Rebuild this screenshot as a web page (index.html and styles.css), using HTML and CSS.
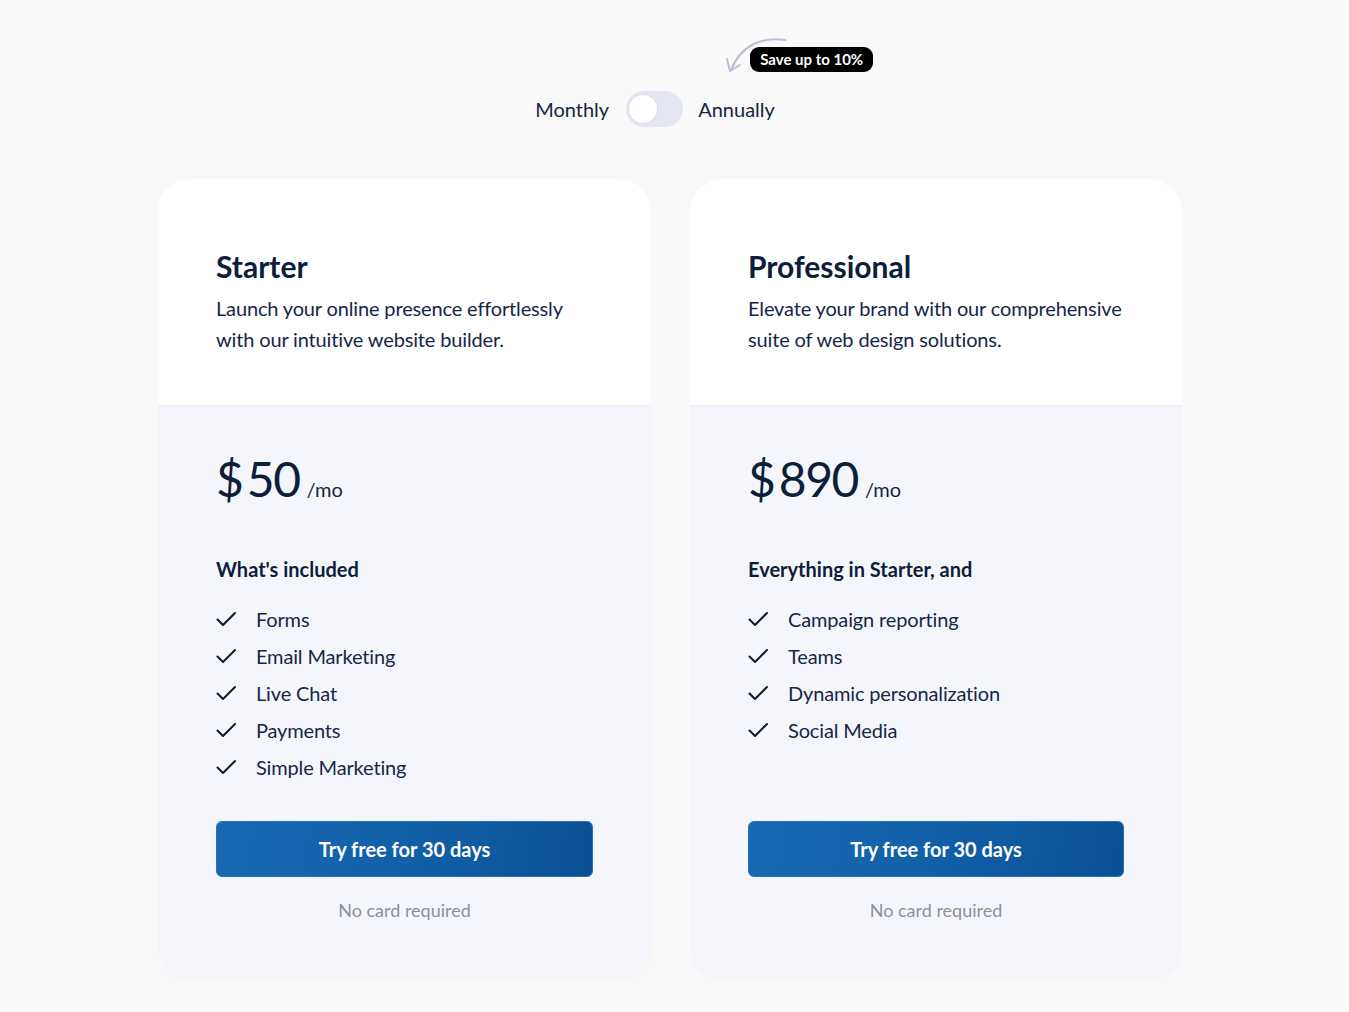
FILE: index.html
```html
<!DOCTYPE html>
<html lang="en">
<head>
<meta charset="utf-8">
<title>Pricing</title>
<link rel="stylesheet" href="styles.css">
</head>
<body>
<main class="page">
  <div class="toggle-row">
    <span class="toggle-label">Monthly</span>
    <span class="switch"><span class="knob"></span></span>
    <span class="toggle-label annual">Annually
      <span class="promo">
        <svg class="promo-arrow" width="64" height="40" viewBox="0 0 64 40" fill="none" stroke="#b7c1cf" stroke-width="2" stroke-linecap="round" stroke-linejoin="round">
          <path d="M61 3 C40 0 18 6 7 33"/>
          <path d="M3 22 L6 34 L16 28"/>
        </svg>
        <span class="badge">Save up to 10%</span>
      </span>
    </span>
  </div>

  <section class="plans">
    <article class="card">
      <header class="card-top">
        <h2 class="plan-name">Starter</h2>
        <p class="plan-desc">Launch your online presence effortlessly with our intuitive website builder.</p>
      </header>
      <div class="card-body">
        <div class="price"><span class="amount">$<span class="num">50</span></span><span class="per">/mo</span></div>
        <h3 class="incl">What's included</h3>
        <ul class="features">
          <li><svg class="check" viewBox="0 0 20 20"><path d="M1.5 10.5 L7 16 L19 4"/></svg>Forms</li>
          <li><svg class="check" viewBox="0 0 20 20"><path d="M1.5 10.5 L7 16 L19 4"/></svg>Email Marketing</li>
          <li><svg class="check" viewBox="0 0 20 20"><path d="M1.5 10.5 L7 16 L19 4"/></svg>Live Chat</li>
          <li><svg class="check" viewBox="0 0 20 20"><path d="M1.5 10.5 L7 16 L19 4"/></svg>Payments</li>
          <li><svg class="check" viewBox="0 0 20 20"><path d="M1.5 10.5 L7 16 L19 4"/></svg>Simple Marketing</li>
        </ul>
        <div class="cta">
          <button class="btn">Try free for 30 days</button>
          <p class="note">No card required</p>
        </div>
      </div>
    </article>

    <article class="card">
      <header class="card-top">
        <h2 class="plan-name">Professional</h2>
        <p class="plan-desc">Elevate your brand with our comprehensive suite of web design solutions.</p>
      </header>
      <div class="card-body">
        <div class="price"><span class="amount">$<span class="num">890</span></span><span class="per">/mo</span></div>
        <h3 class="incl">Everything in Starter, and</h3>
        <ul class="features">
          <li><svg class="check" viewBox="0 0 20 20"><path d="M1.5 10.5 L7 16 L19 4"/></svg>Campaign reporting</li>
          <li><svg class="check" viewBox="0 0 20 20"><path d="M1.5 10.5 L7 16 L19 4"/></svg>Teams</li>
          <li><svg class="check" viewBox="0 0 20 20"><path d="M1.5 10.5 L7 16 L19 4"/></svg>Dynamic personalization</li>
          <li><svg class="check" viewBox="0 0 20 20"><path d="M1.5 10.5 L7 16 L19 4"/></svg>Social Media</li>
        </ul>
        <div class="cta">
          <button class="btn">Try free for 30 days</button>
          <p class="note">No card required</p>
        </div>
      </div>
    </article>
  </section>
</main>
</body>
</html>
```

FILE: styles.css
```css
* { box-sizing: border-box; }

html, body {
  margin: 0;
  padding: 0;
}

body {
  background: #f9f9fa;
  font-family: Lato, "Noto Sans", "Liberation Sans", sans-serif;
  color: #0f1f3c;
  min-height: 1012px;
}

.page {
  width: 1024px;
  margin-left: 158px;
  padding-top: 91px;
}

.toggle-row {
  display: flex;
  align-items: center;
  justify-content: center;
  padding-right: 30px;
  height: 36px;
}

.toggle-label {
  font-size: 20px;
  line-height: 24px;
  color: #15253f;
}

.annual {
  position: relative;
}

.switch {
  width: 57px;
  height: 36px;
  border-radius: 18px;
  background: #e4e7f2;
  margin: 0 15px 0 17px;
  padding: 4px 3px;
  display: flex;
  align-items: center;
}

.knob {
  width: 28px;
  height: 28px;
  border-radius: 50%;
  background: #ffffff;
  box-shadow: 0 0 2px rgba(0, 0, 0, 0.12);
}

.promo {
  position: absolute;
  left: 26px;
  top: -70px;
}

.promo-arrow {
  position: absolute;
  left: 0;
  top: 10px;
}

.badge {
  position: absolute;
  left: 26px;
  top: 20px;
  white-space: nowrap;
  background: #000000;
  color: #ffffff;
  font-size: 15px;
  font-weight: 700;
  line-height: 17px;
  padding: 4px 10px;
  border-radius: 9px;
}

.plans {
  margin-top: 52px;
  display: grid;
  grid-template-columns: 493px 492px;
  column-gap: 39px;
  align-items: stretch;
}

.card {
  border-radius: 32px;
  overflow: hidden;
  display: flex;
  flex-direction: column;
  background: #f5f6fc;
}

.card-top {
  background: #ffffff;
  padding: 69px 56px 50px 58px;
  border-bottom: 2px solid #eff0f4;
}

.plan-name {
  margin: 0;
  font-size: 30px;
  line-height: 36px;
  font-weight: 700;
  color: #0d1e3b;
}

.plan-desc {
  margin: 9px 0 0;
  font-size: 20px;
  line-height: 31px;
  letter-spacing: -0.15px;
  color: #16264a;
}

.card-body {
  flex: 1;
  padding: 44px 58px 59px;
  display: flex;
  flex-direction: column;
}

.price {
  display: flex;
  align-items: baseline;
  height: 56px;
  line-height: 56px;
}

.amount {
  font-size: 48px;
  color: #0d1e3b;
}

.num {
  margin-left: 3px;
  letter-spacing: -1.5px;
}

.per {
  font-size: 20px;
  margin-left: 7px;
  color: #15253f;
}

.incl {
  margin: 48px 0 0;
  font-size: 20px;
  line-height: 28px;
  font-weight: 700;
  color: #0d1e3b;
}

.features {
  list-style: none;
  margin: 17px 0 0;
  padding: 0;
}

.features li {
  display: flex;
  align-items: center;
  height: 37px;
  font-size: 20px;
  letter-spacing: -0.15px;
  color: #16264a;
}

.check {
  width: 20px;
  height: 20px;
  margin-right: 20px;
  fill: none;
  stroke: #111827;
  stroke-width: 2;
  stroke-linecap: round;
  stroke-linejoin: round;
  flex: none;
}

.cta {
  margin-top: auto;
  padding-top: 36px;
  display: flex;
  flex-direction: column;
  align-items: center;
}

.btn {
  width: 100%;
  height: 56px;
  border: 1px solid #2a70b6;
  border-radius: 6px;
  background: linear-gradient(100deg, #1868b2 0%, #1260a8 50%, #0a4f93 100%);
  color: #ffffff;
  font-family: inherit;
  font-size: 20px;
  font-weight: 700;
  cursor: pointer;
}

.note {
  margin: 21px 0 0;
  font-size: 18px;
  line-height: 24px;
  color: #8a919c;
}
```
